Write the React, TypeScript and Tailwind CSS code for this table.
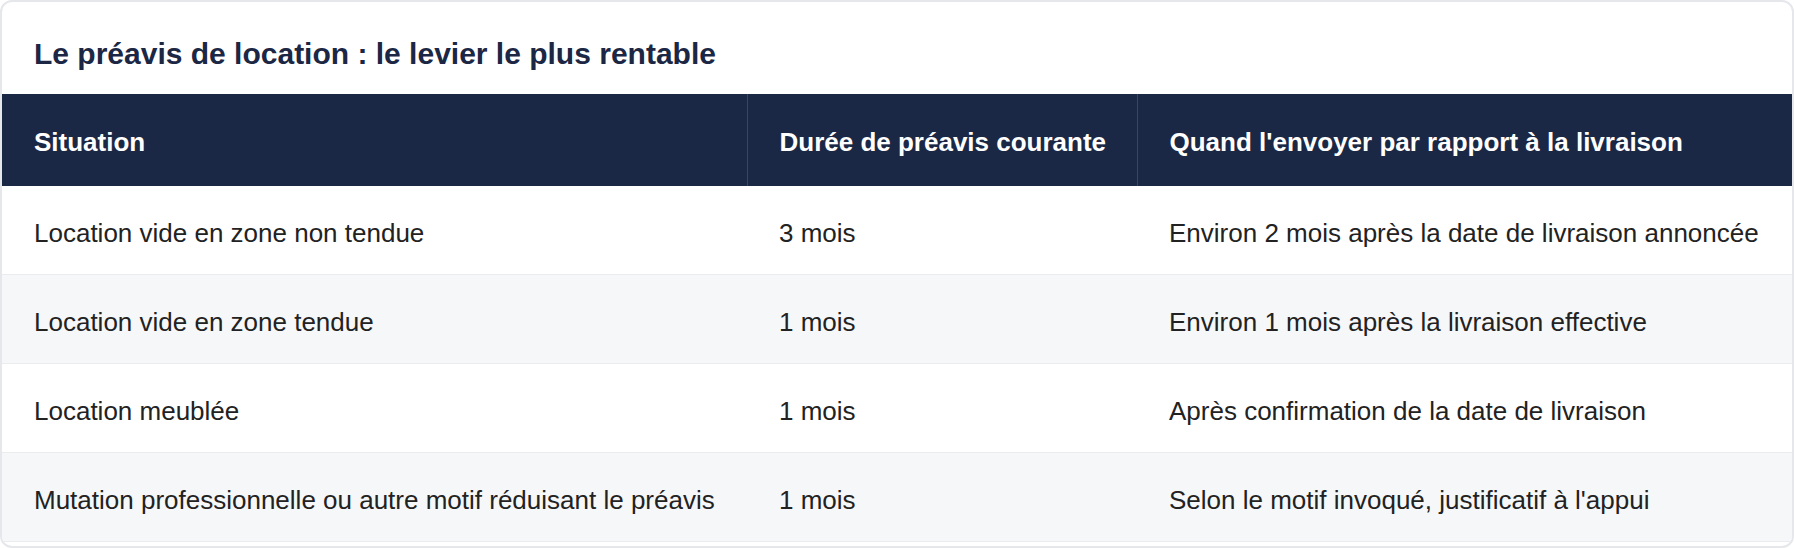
export default function App() {
  const rows = [
    {
      situation: 'Location vide en zone non tendue',
      duree: '3 mois',
      quand: 'Environ 2 mois après la date de livraison annoncée',
    },
    {
      situation: 'Location vide en zone tendue',
      duree: '1 mois',
      quand: 'Environ 1 mois après la livraison effective',
    },
    {
      situation: 'Location meublée',
      duree: '1 mois',
      quand: 'Après confirmation de la date de livraison',
    },
    {
      situation: 'Mutation professionnelle ou autre motif réduisant le préavis',
      duree: '1 mois',
      quand: "Selon le motif invoqué, justificatif à l'appui",
    },
  ];

  return (
    <div className="w-[1794px] h-[548px] bg-white font-['Liberation_Sans',Arial,sans-serif]">
      <section className="h-full rounded-xl border-2 border-[#e5e7eb] bg-white overflow-hidden">
        <h3 className="px-8 pt-[34px] pb-[22px] text-[30px] leading-[36px] font-bold text-[#1b2744]">
          Le préavis de location : le levier le plus rentable
        </h3>

        <table className="w-full table-fixed border-collapse text-[26px]">
          <colgroup>
            <col className="w-[745px]" />
            <col className="w-[390px]" />
            <col />
          </colgroup>
          <thead>
            <tr className="bg-[#1b2845] text-white">
              <th className="px-8 pt-[28px] pb-[24px] leading-[40px] text-left font-bold whitespace-nowrap">
                Situation
              </th>
              <th className="px-8 pt-[28px] pb-[24px] leading-[40px] text-left font-bold whitespace-nowrap border-l border-[#3a4560]">
                Durée de préavis courante
              </th>
              <th className="px-8 pt-[28px] pb-[24px] leading-[40px] text-left font-bold whitespace-nowrap border-l border-[#3a4560]">
                Quand l'envoyer par rapport à la livraison
              </th>
            </tr>
          </thead>
          <tbody className="text-[#222222]">
            {rows.map((row, index) => (
              <tr
                key={index}
                className={`border-b border-[#eaecef] ${index % 2 === 1 ? 'bg-[#f6f7f9]' : 'bg-white'}`}
              >
                <td className="px-8 pt-[27px] pb-[21px] leading-[40px] whitespace-nowrap">{row.situation}</td>
                <td className="px-8 pt-[27px] pb-[21px] leading-[40px] whitespace-nowrap">{row.duree}</td>
                <td className="px-8 pt-[27px] pb-[21px] leading-[40px] whitespace-nowrap">{row.quand}</td>
              </tr>
            ))}
          </tbody>
        </table>
      </section>
    </div>
  );
}
